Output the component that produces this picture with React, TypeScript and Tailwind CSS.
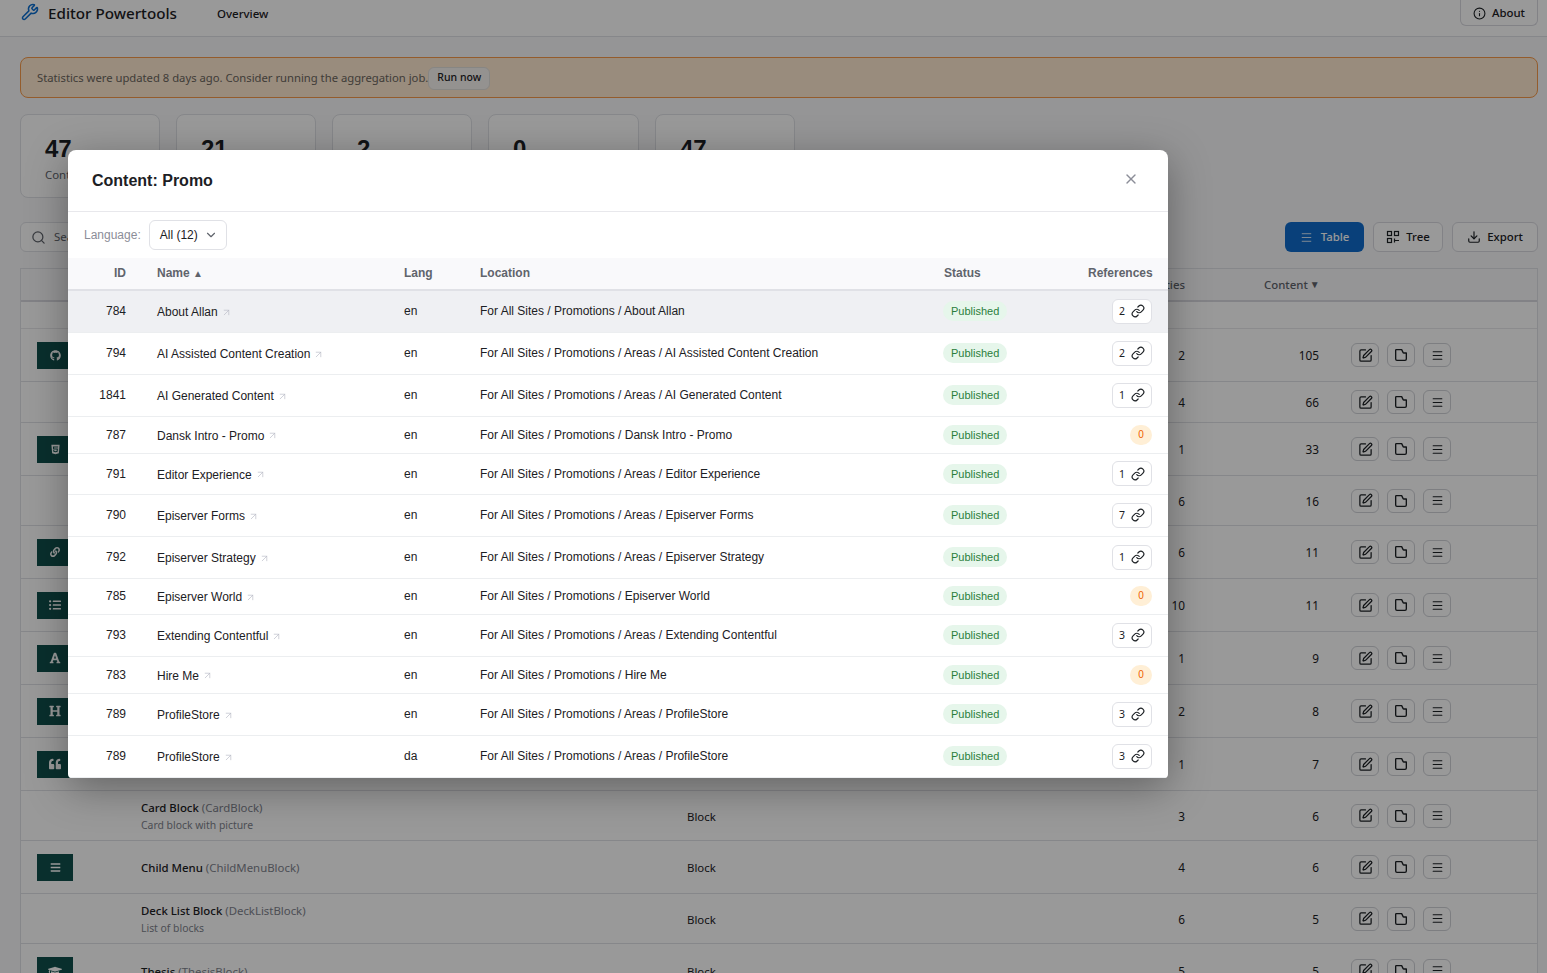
import { ChevronDown, Download, Info, Link, Menu, SquarePen, Wrench, X, ArrowUpRight, Search } from "lucide-react";
import { FaBars, FaFont, FaGithub, FaGraduationCap, FaHeading, FaHtml5, FaLink, FaListUl, FaQuoteLeft } from "react-icons/fa";
import type { ReactNode } from "react";

type TypeRow = {
  h: string;
  icon?: ReactNode;
  name?: string;
  code?: string;
  desc?: string;
  props: number;
  content: number;
};

const typeRows: TypeRow[] = [
  { h: "h-[53px]", icon: <FaGithub size={11} />, props: 2, content: 105 },
  { h: "h-[41px]", props: 4, content: 66 },
  { h: "h-[53px]", icon: <FaHtml5 size={11} />, props: 1, content: 33 },
  { h: "h-[50px]", props: 6, content: 16 },
  { h: "h-[53px]", icon: <FaLink size={10} />, props: 6, content: 11 },
  { h: "h-[53px]", icon: <FaListUl size={12} />, props: 10, content: 11 },
  { h: "h-[53px]", icon: <FaFont size={12} />, props: 1, content: 9 },
  { h: "h-[53px]", icon: <FaHeading size={12} />, props: 2, content: 8 },
  { h: "h-[53px]", icon: <FaQuoteLeft size={12} />, props: 1, content: 7 },
  { h: "h-[50px]", name: "Card Block", code: "CardBlock", desc: "Card block with picture", props: 3, content: 6 },
  { h: "h-[53px]", icon: <FaBars size={11} />, name: "Child Menu", code: "ChildMenuBlock", props: 4, content: 6 },
  { h: "h-[50px]", name: "Deck List Block", code: "DeckListBlock", desc: "List of blocks", props: 6, content: 5 },
  { h: "h-[54px]", icon: <FaGraduationCap size={14} />, name: "Thesis", code: "ThesisBlock", props: 5, content: 5 },
];

type PromoRow = { h: string; id: number; name: string; lang: string; location: string; refs: number; hover?: boolean };

const promoRows: PromoRow[] = [
  { h: "h-[42px]", id: 784, name: "About Allan", lang: "en", location: "For All Sites / Promotions / About Allan", refs: 2, hover: true },
  { h: "h-[42px]", id: 794, name: "AI Assisted Content Creation", lang: "en", location: "For All Sites / Promotions / Areas / AI Assisted Content Creation", refs: 2 },
  { h: "h-[42px]", id: 1841, name: "AI Generated Content", lang: "en", location: "For All Sites / Promotions / Areas / AI Generated Content", refs: 1 },
  { h: "h-[37px]", id: 787, name: "Dansk Intro - Promo", lang: "en", location: "For All Sites / Promotions / Dansk Intro - Promo", refs: 0 },
  { h: "h-[41px]", id: 791, name: "Editor Experience", lang: "en", location: "For All Sites / Promotions / Areas / Editor Experience", refs: 1 },
  { h: "h-[42px]", id: 790, name: "Episerver Forms", lang: "en", location: "For All Sites / Promotions / Areas / Episerver Forms", refs: 7 },
  { h: "h-[42px]", id: 792, name: "Episerver Strategy", lang: "en", location: "For All Sites / Promotions / Areas / Episerver Strategy", refs: 1 },
  { h: "h-[36px]", id: 785, name: "Episerver World", lang: "en", location: "For All Sites / Promotions / Episerver World", refs: 0 },
  { h: "h-[42px]", id: 793, name: "Extending Contentful", lang: "en", location: "For All Sites / Promotions / Areas / Extending Contentful", refs: 3 },
  { h: "h-[37px]", id: 783, name: "Hire Me", lang: "en", location: "For All Sites / Promotions / Hire Me", refs: 0 },
  { h: "h-[42px]", id: 789, name: "ProfileStore", lang: "en", location: "For All Sites / Promotions / Areas / ProfileStore", refs: 3 },
  { h: "h-[42px]", id: 789, name: "ProfileStore", lang: "da", location: "For All Sites / Promotions / Areas / ProfileStore", refs: 3 },
];

const stats = [
  { value: "47", label: "Content Types", w: "w-[140px]" },
  { value: "21", w: "w-[140px]" },
  { value: "2", w: "w-[140px]" },
  { value: "0", w: "w-[151px]" },
  { value: "47", w: "w-[140px]" },
];

function TreeIcon() {
  return (
    <svg width="14" height="14" viewBox="0 0 14 14" fill="none" stroke="currentColor" strokeWidth="1.2">
      <rect x="1.5" y="1.5" width="4" height="4" />
      <rect x="8.5" y="1.5" width="4" height="4" />
      <rect x="1.5" y="8.5" width="4" height="4" />
      <path d="M8 10.5h5M8.5 8.5v4" />
    </svg>
  );
}

function FileIcon() {
  return (
    <svg width="16" height="16" viewBox="0 0 24 24" fill="none" stroke="currentColor" strokeWidth="2" strokeLinejoin="round">
      <path d="M4 5a1 1 0 0 1 1-1h8l2 4a1 1 0 0 0 1 1h4v9a2 2 0 0 1-2 2H6a2 2 0 0 1-2-2z" />
    </svg>
  );
}

function ActionButton({ children }: { children: ReactNode }) {
  return (
    <button className="grid h-6 w-7 place-items-center rounded-md border border-[#d0d2d8] text-[#1c2024]">{children}</button>
  );
}

function ToolButton({ w, children }: { w: string; children: ReactNode }) {
  return (
    <button className={`${w} flex h-[30px] items-center justify-center gap-1.5 rounded-md border border-[#d9d9e0] bg-white text-[11.4px] font-medium text-[#1c2024]`}>
      {children}
    </button>
  );
}

function PromoTableRow({ row }: { row: PromoRow }) {
  return (
    <tr className={`${row.h} border-b border-[#eceef0] ${row.hover ? "bg-[#eff0f3]" : ""}`}>
      <td className="px-4 text-right">{row.id}</td>
      <td className="px-[15px]">
        <span className="relative top-px inline-flex items-center gap-[3px]">
          {row.name}
          <ArrowUpRight size={11} strokeWidth={1.5} className="text-[#b9bbc6]" />
        </span>
      </td>
      <td className="px-[15px]">{row.lang}</td>
      <td className="px-[15px]">{row.location}</td>
      <td className="px-[15px]">
        <span className="inline-block rounded-full bg-[#e6f6eb] px-2 py-[3px] text-[11px] leading-[14px] text-[#2a7e3b]">Published</span>
      </td>
      <td className="px-4 text-right">
        {row.refs === 0 ? (
          <span className="inline-grid h-5 w-[22px] place-items-center rounded-full bg-[#ffefd6] text-[10px] text-[#ef5f00]">0</span>
        ) : (
          <span className="inline-flex h-[25px] items-center gap-[6px] rounded-md border border-[#e0e1e6] bg-white px-[6px] align-middle font-['Noto_Sans',sans-serif] text-[10.5px]">
            {row.refs}
            <Link size={14} className="text-[#1c2024]" />
          </span>
        )}
      </td>
    </tr>
  );
}

export default function App() {
  return (
    <div className="relative h-[973px] overflow-hidden bg-[#f8f9fa] font-['Noto_Sans',sans-serif] text-[11.4px] text-[#1c2024]">
      <header className="flex h-[37px] items-start border-b border-[#e0e1e6] bg-white pr-[9px] pl-[21px]">
        <Wrench size={18} className="mt-[3px] text-[#0d6fd1]" />
        <span className="ml-[9px] text-[15.2px] leading-[27px] font-medium">Editor Powertools</span>
        <span className="ml-10 text-[11.5px] leading-[28px] font-medium">Overview</span>
        <button className="ml-auto flex h-[26px] w-[78px] items-center justify-center gap-1.5 rounded-b-md border border-t-0 border-[#d9d9e0] pt-px text-[11.4px] font-medium">
          <Info size={13} />
          About
        </button>
      </header>

      <main className="pt-5 pr-[9px] pl-5">
        <div className="flex h-[41px] items-center rounded-lg border border-[#f79a4a] bg-[#ffe9d0] pt-px pl-4 text-[11.25px] text-[#6b665e]">
          Statistics were updated 8 days ago. Consider running the aggregation job.
          <button className="h-[23px] rounded-md border border-[#e2dfdb] bg-[#f7f4f0] px-2 text-[10.5px] font-medium text-[#1c2024]">Run now</button>
        </div>

        <div className="mt-4 flex gap-4">
          {stats.map((s, i) => (
            <div key={i} className={`${s.w} h-[84px] rounded-lg border border-[#e0e1e6] bg-white px-6 pt-5`}>
              <div className="font-['Liberation_Sans',sans-serif] text-2xl leading-7 font-bold">{s.value}</div>
              {s.label && <div className="mt-[3px] text-[#60646c]">{s.label}</div>}
            </div>
          ))}
        </div>

        <div className="mt-6 flex items-center justify-between">
          <div className="flex h-[30px] w-[300px] items-center gap-2 rounded-md border border-[#e0e1e6] bg-white px-2.5 text-[#60646c]">
            <Search size={15} />
            Search...
          </div>
          <div className="flex gap-[9px]">
            <button className="flex h-[30px] w-[79px] items-center justify-center gap-2 rounded-md bg-[#0f6ccc] text-[11.4px] font-medium text-white">
              <Menu size={13} strokeWidth={1.5} />
              Table
            </button>
            <ToolButton w="w-[70px]">
              <TreeIcon />
              Tree
            </ToolButton>
            <ToolButton w="w-[86px]">
              <Download size={14} />
              Export
            </ToolButton>
          </div>
        </div>

        <div className="mt-4 border border-[#e0e1e6] bg-white">
          <div className="flex h-[33px] items-center border-b-2 border-[#d9d9e0] bg-[#f9f9fb] pt-px font-medium text-[#60646c]">
            <div className="w-[1164px] text-right">Properties</div>
            <div className="ml-[79px] flex items-center gap-[2px]">
              Content <span className="text-[10px]">▼</span>
            </div>
          </div>
          <div className="h-[27px] border-b border-[#e8e8ec]" />
          {typeRows.map((r, i) => (
            <div key={i} className={`${r.h} flex items-center border-b border-[#e0e1e6]`}>
              <div className="w-[120px] pl-4">
                {r.icon && <div className="grid h-[27px] w-9 place-items-center bg-[#0f4f4c] text-white">{r.icon}</div>}
              </div>
              <div className={`w-[546px] ${r.desc ? "" : "pt-0.5"}`}>
                {r.name && (
                  <>
                    <div className="leading-4">
                      <span className="font-medium">{r.name}</span> <span className="text-[#80838d]">({r.code})</span>
                    </div>
                    {r.desc && <div className="mt-0.5 text-[10.4px] leading-[14px] text-[#80838d]">{r.desc}</div>}
                  </>
                )}
              </div>
              <div className="w-[50px] pt-0.5">{r.name && "Block"}</div>
              <div className="w-[448px] pt-0.5 text-right text-[11.8px]">{r.props}</div>
              <div className="w-[134px] pt-0.5 text-right text-[11.8px]">{r.content}</div>
              <div className="ml-8 flex gap-2">
                <ActionButton>
                  <SquarePen size={15} />
                </ActionButton>
                <ActionButton>
                  <FileIcon />
                </ActionButton>
                <ActionButton>
                  <Menu size={13} />
                </ActionButton>
              </div>
            </div>
          ))}
        </div>
      </main>

      {/* dialog backdrop + panel */}
      <div className="absolute inset-0 bg-black/40" />
      <div className="absolute top-[150px] left-[68px] w-[1100px] overflow-hidden rounded-t-lg rounded-b-[4px] bg-white font-['Liberation_Sans',sans-serif] text-xs text-[#1c2024] shadow-[0_10px_40px_rgba(0,0,0,0.35)]">
        <div className="flex h-[62px] items-center justify-between border-b border-[#e8e8ec] pr-[29px] pl-6">
          <h2 className="text-base font-bold">Content: Promo</h2>
          <X size={16} className="-mt-1 text-[#8b8d98]" />
        </div>
        <div className="flex h-[46px] items-center gap-2 pl-4">
          <span className="text-[#8b8d98]">Language:</span>
          <button className="flex h-[30px] w-[78px] items-center justify-between rounded-md border border-[#e0e1e6] pr-2 pl-2.5">
            All (12)
            <ChevronDown size={14} className="text-[#60646c]" />
          </button>
        </div>
        <table className="w-full table-fixed">
          <colgroup>
            <col className="w-[74px]" />
            <col className="w-[247px]" />
            <col className="w-[76px]" />
            <col className="w-[463px]" />
            <col className="w-[144px]" />
            <col className="w-[96px]" />
          </colgroup>
          <thead>
            <tr className="h-8 border-b-2 border-[#e0e1e6] bg-[#f9f9fb] text-[#60646c]">
              <th className="px-4 pb-[2px] text-right font-bold">ID</th>
              <th className="px-[15px] pb-[2px] text-left font-bold">
                Name <span className="text-[10px]">▲</span>
              </th>
              <th className="px-[15px] pb-[2px] text-left font-bold">Lang</th>
              <th className="px-[15px] pb-[2px] text-left font-bold">Location</th>
              <th className="pr-[15px] pb-[2px] pl-4 text-left font-bold">Status</th>
              <th className="px-4 pb-[2px] text-right font-bold">References</th>
            </tr>
          </thead>
          <tbody>
            {promoRows.map((row, i) => (
              <PromoTableRow key={i} row={row} />
            ))}
          </tbody>
        </table>
      </div>
    </div>
  );
}
